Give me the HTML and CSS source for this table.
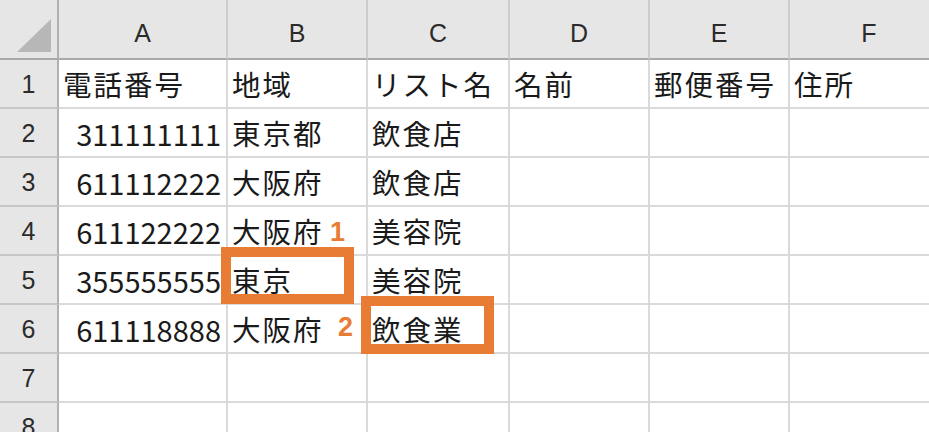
FILE: index.html
```html
<!DOCTYPE html>
<html lang="ja">
<head>
<meta charset="utf-8">
<title>Sheet</title>
<link rel="stylesheet" href="styles.css">
</head>
<body>
<div class="sheet">
  <div class="grid">
    <div class="corner"><svg class="tri" width="58" height="58" viewBox="0 0 58 58"><polygon points="17,52 51,52 51,19" fill="#b7b7b7"/></svg></div>
    <div class="ch">A</div><div class="ch">B</div><div class="ch">C</div><div class="ch">D</div><div class="ch">E</div><div class="ch">F</div>

    <div class="rh">1</div><div class="c">電話番号</div><div class="c">地域</div><div class="c">リスト名</div><div class="c">名前</div><div class="c">郵便番号</div><div class="c">住所</div>
    <div class="rh">2</div><div class="c num">311111111</div><div class="c">東京都</div><div class="c">飲食店</div><div class="c"></div><div class="c"></div><div class="c"></div>
    <div class="rh">3</div><div class="c num">611112222</div><div class="c">大阪府</div><div class="c">飲食店</div><div class="c"></div><div class="c"></div><div class="c"></div>
    <div class="rh">4</div><div class="c num">611122222</div><div class="c">大阪府</div><div class="c">美容院</div><div class="c"></div><div class="c"></div><div class="c"></div>
    <div class="rh">5</div><div class="c num">355555555</div><div class="c">東京</div><div class="c">美容院</div><div class="c"></div><div class="c"></div><div class="c"></div>
    <div class="rh">6</div><div class="c num">611118888</div><div class="c">大阪府</div><div class="c">飲食業</div><div class="c"></div><div class="c"></div><div class="c"></div>
    <div class="rh">7</div><div class="c"></div><div class="c"></div><div class="c"></div><div class="c"></div><div class="c"></div><div class="c"></div>
    <div class="rh">8</div><div class="c"></div><div class="c"></div><div class="c"></div><div class="c"></div><div class="c"></div><div class="c"></div>
  </div>
  <div class="mark box1"></div>
  <div class="mark box2"></div>
  <div class="label lab1">1</div>
  <div class="label lab2">2</div>
</div>
</body>
</html>
```

FILE: styles.css
```css
* { box-sizing: border-box; }
html, body { margin: 0; padding: 0; background: #ffffff; }
body { width: 929px; height: 432px; overflow: hidden; }
.sheet { position: relative; width: 929px; height: 432px; overflow: hidden; }
.grid {
  display: grid;
  grid-template-columns: 59px 169px 140px 142px 140px 140px 160px;
  grid-template-rows: 60px repeat(8, 49px);
  font-family: "Noto Sans CJK JP", "Noto Sans", sans-serif;
  color: #1a1a1a;
}
.corner {
  background: #e6e6e6;
  border-right: 2px solid #b0b0b0;
  border-bottom: 2px solid #a9a9a9;
}
.tri { display: block; }
.ch {
  background: #e6e6e6;
  border-right: 2px solid #cdcdcd;
  border-bottom: 2px solid #a9a9a9;
  display: flex;
  align-items: center;
  justify-content: center;
  padding-top: 8px;
  font-family: "Liberation Sans", Arial, sans-serif;
  font-size: 25px;
  color: #2b2b2b;
}
.rh {
  background: #e6e6e6;
  border-right: 2px solid #b0b0b0;
  border-bottom: 2px solid #c6c6c6;
  display: flex;
  align-items: center;
  justify-content: center;
  padding-top: 2px;
  font-family: "Liberation Sans", Arial, sans-serif;
  font-size: 25px;
  color: #2b2b2b;
}
.c {
  border-right: 2px solid #dadada;
  border-bottom: 2px solid #dadada;
  display: flex;
  align-items: center;
  padding: 0 0 0 4px;
  font-size: 28.5px;
  letter-spacing: 2px;
  white-space: nowrap;
}
.num {
  justify-content: flex-end;
  padding: 0 5px 0 0;
  letter-spacing: 0;
  font-size: 29px;
}
.mark {
  position: absolute;
  border: 10px solid #e97c34;
}
.box1 { left: 221px; top: 247px; width: 133px; height: 57px; }
.box2 { left: 361px; top: 296px; width: 133px; height: 58px; }
.label {
  position: absolute;
  font-family: "Liberation Sans", Arial, sans-serif;
  font-weight: bold;
  font-size: 27px;
  line-height: 27px;
  color: #e97c34;
}
.lab1 { left: 330px; top: 219px; }
.lab2 { left: 338px; top: 314px; }
```
